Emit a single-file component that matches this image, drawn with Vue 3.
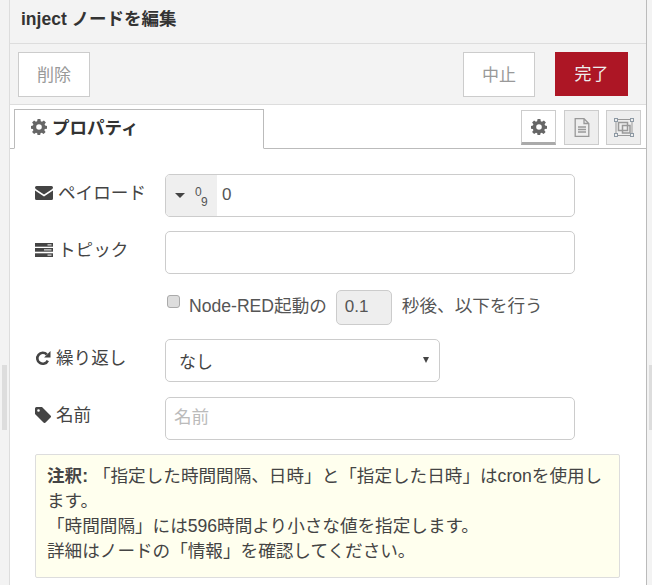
<script setup>
const noteLines = [
  '「時間間隔」には596時間より小さな値を指定します。',
  '詳細はノードの「情報」を確認してください。',
]
</script>

<template>
  <div class="page">
    <div class="tray">
      <header class="title">inject ノードを編集</header>
      <div class="toolbar">
        <button class="btn del">削除</button>
        <div class="spacer"></div>
        <button class="btn cancel">中止</button>
        <button class="btn done">完了</button>
      </div>
      <div class="tabs">
        <div class="tab">
          <svg class="tab-gear" viewBox="0 0 16 16"><path fill="#666" fill-rule="evenodd" d="M6.6 0h2.8l.4 2.2 1.2.5L12.9 1.4l2 2-1.3 1.9.5 1.2 1.9.4v2.8l-2.2.4-.5 1.2 1.3 1.8-2 2-1.9-1.3-1.2.5-.4 2.2H6.6l-.4-2.2-1.2-.5-1.9 1.3-2-2 1.3-1.8-.5-1.2L0 9.7V6.9l1.9-.4.5-1.2-1.3-1.9 2-2 1.8 1.3 1.2-.5zM8 5.2a2.8 2.8 0 1 0 0 5.6 2.8 2.8 0 0 0 0-5.6z"/></svg>
          <span>プロパティ</span>
        </div>
        <div class="tab-icons">
          <div class="ti active">
            <svg viewBox="0 0 16 16"><path fill="#666" fill-rule="evenodd" d="M6.6 0h2.8l.4 2.2 1.2.5L12.9 1.4l2 2-1.3 1.9.5 1.2 1.9.4v2.8l-2.2.4-.5 1.2 1.3 1.8-2 2-1.9-1.3-1.2.5-.4 2.2H6.6l-.4-2.2-1.2-.5-1.9 1.3-2-2 1.3-1.8-.5-1.2L0 9.7V6.9l1.9-.4.5-1.2-1.3-1.9 2-2 1.8 1.3 1.2-.5zM8 5.2a2.8 2.8 0 1 0 0 5.6 2.8 2.8 0 0 0 0-5.6z"/></svg>
          </div>
          <div class="ti">
            <svg viewBox="0 0 16 19"><path fill="none" stroke="#999" stroke-width="1.3" d="M1.200 .7h8.800l4.800 4.800v12.800H1.200zM10 .7v4.800h4.800"/><path stroke="#999" stroke-width="1.3" d="M4 9h8M4 11.500h8M4 14h8"/></svg>
          </div>
          <div class="ti">
            <svg viewBox="0 0 20 19"><g fill="none" stroke="#999"><path stroke-width="1" d="M2 1.500h16v16H2z"/><path stroke-width="1.500" d="M4.500 4.500h9v8h-9zM8.500 7.500h7.500v7.500H8.500z"/></g><g fill="#eee" stroke="#8d99a4" stroke-width="1"><rect x=".5" y=".5" width="3" height="3"/><rect x="16.500" y=".5" width="3" height="3"/><rect x=".5" y="15.500" width="3" height="3"/><rect x="16.500" y="15.500" width="3" height="3"/></g></svg>
          </div>
        </div>
      </div>

      <div class="form">
        <div class="row first">
          <label class="lab">
            <svg class="ic" viewBox="0 0 18 14"><path fill="#444" d="M1.5 0h15A1.5 1.5 0 0 1 18 1.5c0 .7-.5 1.3-1 1.7L9 8.400 1 3.200C.5 2.800 0 2.200 0 1.500A1.500 1.500 0 0 1 1.500 0zM0 4.600l9 5.800 9-5.800v7.900a1.500 1.500 0 0 1-1.500 1.500h-15A1.500 1.500 0 0 1 0 12.500z"/></svg>
            <span>ペイロード</span>
          </label>
          <div class="typed">
            <div class="type-btn">
              <span class="caret"></span>
              <span class="digits"><i>0</i><i>9</i></span>
            </div>
            <span class="val">0</span>
          </div>
        </div>
        <div class="row">
          <label class="lab">
            <svg class="ic" viewBox="0 0 18 14"><g fill="#444"><rect width="18" height="3.700"/><rect y="5" width="18" height="3.700"/><rect y="10.300" width="18" height="3.700"/></g><g fill="#fff"><rect x="12.500" y="1.400" width="4" height="1"/><rect x="9" y="6.400" width="7.500" height="1"/><rect x="12.500" y="11.600" width="4" height="1"/></g></svg>
            <span>トピック</span>
          </label>
          <div class="field wide"></div>
        </div>
        <div class="once">
          <span class="check"></span>
          <span class="once-text">Node-RED起動の</span>
          <span class="delay">0.1</span>
          <span class="once-text">秒後、以下を行う</span>
        </div>
        <div class="row rep">
          <label class="lab">
            <svg class="ic ic-rep" viewBox="0 0 15 15"><path fill="none" stroke="#444" stroke-width="2.600" d="M12.300 9.600A5.500 5.500 0 1 1 11.300 3.500"/><path fill="#444" d="M15 0v6.400H8.600z"/></svg>
            <span>繰り返し</span>
          </label>
          <div class="field select">
            <span>なし</span>
            <span class="sel-caret"></span>
          </div>
        </div>
        <div class="row name">
          <label class="lab">
            <svg class="ic ic-tag" viewBox="0 0 16 16"><path fill="#444" fill-rule="evenodd" d="M0 1.500A1.500 1.500 0 0 1 1.500 0H7l8.500 8.500a1.500 1.500 0 0 1 0 2.100l-4.900 4.900a1.500 1.500 0 0 1-2.100 0L0 7zM3.500 2.200a1.300 1.300 0 1 0 0 2.600 1.300 1.300 0 0 0 0-2.600z"/></svg>
            <span>名前</span>
          </label>
          <div class="field wide ph"><span>名前</span></div>
        </div>
        <div class="tip">
          <div><b>注釈:</b> 「指定した時間間隔、日時」と「指定した日時」はcronを使用します。</div>
          <div v-for="line in noteLines" :key="line">{{ line }}</div>
        </div>
      </div>
    </div>
    <div class="handle left"></div>
    <div class="handle right"></div>
  </div>
</template>

<style scoped>
.page {
  position: relative;
  width: 652px;
  height: 585px;
  overflow: hidden;
  background: #f3f3f3;
  font-family: "Liberation Sans", "Noto Sans CJK JP", sans-serif;
  color: #444;
  font-size: 17px;
}
.tray {
  margin-left: 9px;
  width: 638px;
  height: 585px;
  box-sizing: border-box;
  border-left: 1px solid #ddd;
  border-right: 1px solid #bbb;
  background: #fff;
}
.title {
  height: 44px;
  box-sizing: border-box;
  background: #f3f3f3;
  border-bottom: 1px solid #ddd;
  padding: 7px 0 0 11px;
  font-size: 17.500px;
  font-weight: 700;
  line-height: 24px;
  color: #333;
}
.toolbar {
  height: 61px;
  box-sizing: border-box;
  background: #f3f3f3;
  border-bottom: 1px solid #ddd;
  display: flex;
  align-items: flex-start;
  padding: 8px 18px 0 8px;
}
.spacer { flex: 1; }
.btn {
  font-family: inherit;
  font-size: 17px;
  width: 72px;
  height: 45px;
  border: 1px solid #ccc;
  background: #fff;
  color: #999;
  padding: 0 0 3px;
}
.cancel { margin-right: 20px; }
.done {
  width: 73px;
  height: 44px;
  background: #ad1625;
  border-color: #ad1625;
  color: #eee;
}
.tabs {
  height: 44px;
  box-sizing: border-box;
  border-bottom: 1px solid #bbb;
  display: flex;
  justify-content: space-between;
  padding: 4px 5px 0 4px;
}
.tab {
  width: 250px;
  height: 40px;
  box-sizing: border-box;
  border: 1px solid #bbb;
  border-bottom: 1px solid #fff;
  background: #fff;
  display: flex;
  align-items: center;
  gap: 5px;
  padding: 0 0 5px 16px;
  font-size: 17.500px;
  font-weight: 700;
  color: #333;
}
.tab-gear { width: 16px; height: 16px; }
.tab-icons {
  display: flex;
  gap: 7px;
  margin-top: 1px;
}
.ti {
  width: 35px;
  height: 35px;
  box-sizing: border-box;
  border: 1px solid #ccc;
  background: #eee;
  display: flex;
  align-items: center;
  justify-content: center;
}
.ti svg { width: 16px; height: 19px; }
.ti:last-child svg { width: 20px; height: 19px; }
.ti.active {
  background: #fff;
  border-bottom: 3px solid #aaa;
  margin-right: 1px;
}
.ti.active svg { width: 16px; height: 16px; }
.form { padding: 25px 26px 0 25px; }
.row {
  display: flex;
  align-items: flex-start;
  margin-bottom: 15px;
}
.first { margin-bottom: 14px; }
.lab {
  width: 130px;
  height: 38px;
  display: flex;
  align-items: center;
  gap: 5px;
  font-size: 17.600px;
  color: #444;
  flex: none;
}
.lab span { margin-bottom: 4px; }
.first .lab span { margin-bottom: 3px; }
.name .lab span { margin-bottom: 6px; }
.ic { width: 18px; height: 14px; flex: none; }
.ic-rep { width: 16px; height: 15px; }
.ic-tag { width: 16px; height: 16px; margin-bottom: 2px; }
.typed,
.field {
  height: 43px;
  box-sizing: border-box;
  border: 1px solid #ccc;
  border-radius: 5px;
  background: #fff;
}
.typed {
  width: 410px;
  display: flex;
  align-items: center;
  overflow: hidden;
}
.type-btn {
  width: 51px;
  height: 100%;
  background: #efefef;
  display: flex;
  align-items: center;
  gap: 10px;
  padding-left: 9px;
  box-sizing: border-box;
  flex: none;
}
.caret {
  width: 0;
  height: 0;
  border-left: 5px solid transparent;
  border-right: 5px solid transparent;
  border-top: 5px solid #444;
}
.digits { position: relative; width: 13px; height: 20px; color: #555; font-size: 12px; line-height: 12px; }
.digits i { position: absolute; font-style: normal; }
.digits i:first-child { left: 0; top: 0; }
.digits i:last-child { left: 6px; top: 10px; }
.val { margin: 0 0 2px 5px; font-size: 17px; color: #555; }
.wide { width: 410px; }
.once {
  display: flex;
  align-items: center;
  height: 36px;
  padding-left: 132px;
  margin-bottom: 14px;
}
.check {
  width: 13px;
  height: 13px;
  box-sizing: border-box;
  border: 1px solid #aaa;
  border-radius: 3px;
  background: #ddd;
  margin: 0 9px 11px 0;
}
.once-text { font-size: 17.600px; color: #555; margin-bottom: 5px; }
.delay {
  width: 56px;
  height: 35px;
  box-sizing: border-box;
  margin: 0 10px 0 9px;
  border: 1px solid #ccc;
  border-radius: 5px;
  background: #eee;
  color: #555;
  display: flex;
  align-items: center;
  padding-left: 8px;
}
.select {
  width: 275px;
  display: flex;
  align-items: center;
  justify-content: space-between;
  padding: 0 10px 0 13px;
  color: #444;
}
.sel-caret {
  width: 0;
  height: 0;
  border-left: 3px solid transparent;
  border-right: 3px solid transparent;
  border-top: 6px solid #444;
  margin-top: -2px;
}
.ph {
  display: flex;
  align-items: center;
  padding: 0 0 6px 8px;
  color: #bbb;
  font-size: 17.600px;
}
.name { margin-bottom: 14px; }
.tip {
  width: 585px;
  height: 124px;
  box-sizing: border-box;
  border: 1px solid #ddd;
  border-radius: 2px;
  background: #ffe;
  padding: 9px 11px;
  font-size: 17.600px;
  line-height: 25px;
  color: #444;
}
.tip b { font-weight: 700; }
.handle {
  position: absolute;
  top: 365px;
  width: 5px;
  height: 65px;
  background: #ddd;
}
.handle.left { left: 2px; }
.handle.right { left: 649px; }
</style>
